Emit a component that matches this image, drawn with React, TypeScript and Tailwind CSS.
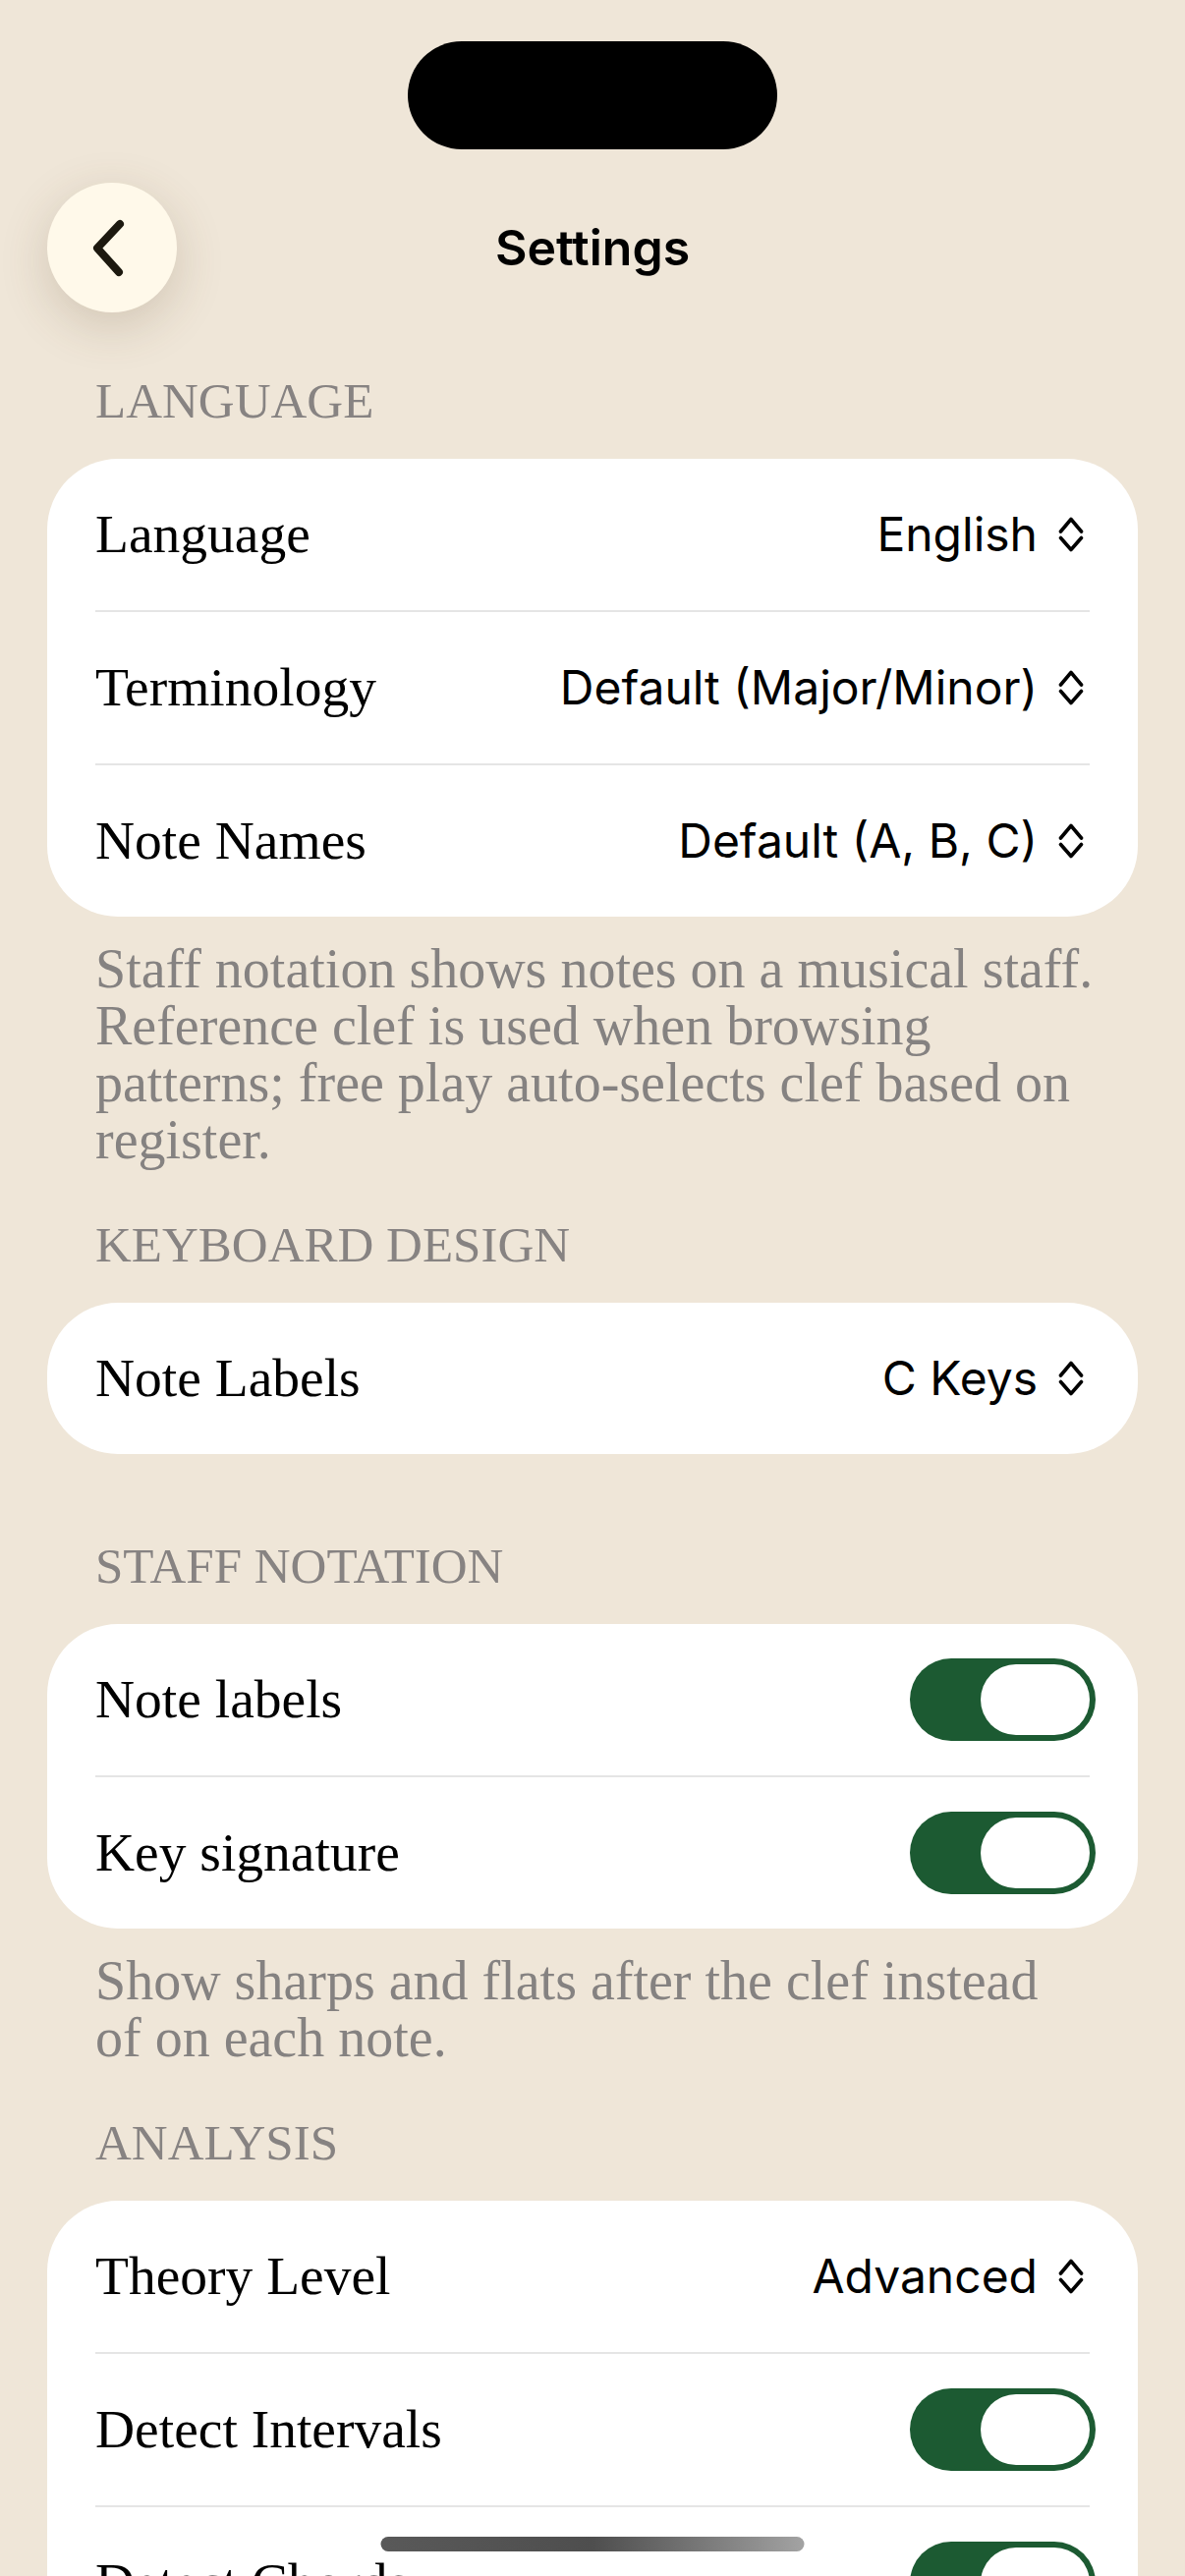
import React from 'react';

type Row =
  | { kind: 'picker'; label: string; value: string }
  | { kind: 'toggle'; label: string; on: boolean };

interface Section {
  title: string;
  gap: string;
  rows: Row[];
  footer?: string[];
}

const sections: Section[] = [
  {
    title: 'LANGUAGE',
    gap: 'mt-[60px]',
    rows: [
      { kind: 'picker', label: 'Language', value: 'English' },
      { kind: 'picker', label: 'Terminology', value: 'Default (Major/Minor)' },
      { kind: 'picker', label: 'Note Names', value: 'Default (A, B, C)' },
    ],
    footer: [
      'Staff notation shows notes on a musical staff.',
      'Reference clef is used when browsing',
      'patterns; free play auto-selects clef based on',
      'register.',
    ],
  },
  {
    title: 'KEYBOARD DESIGN',
    gap: 'mt-[48px]',
    rows: [{ kind: 'picker', label: 'Note Labels', value: 'C Keys' }],
  },
  {
    title: 'STAFF NOTATION',
    gap: 'mt-[84px]',
    rows: [
      { kind: 'toggle', label: 'Note labels', on: true },
      { kind: 'toggle', label: 'Key signature', on: true },
    ],
    footer: ['Show sharps and flats after the clef instead', 'of on each note.'],
  },
  {
    title: 'ANALYSIS',
    gap: 'mt-[48px]',
    rows: [
      { kind: 'picker', label: 'Theory Level', value: 'Advanced' },
      { kind: 'toggle', label: 'Detect Intervals', on: true },
      { kind: 'toggle', label: 'Detect Chords', on: true },
      { kind: 'toggle', label: 'Detect Scales', on: false },
    ],
  },
];

const serif = "font-['Liberation_Serif',Georgia,serif]";
const sans = "font-['Inter','Liberation_Sans',sans-serif]";

const UpDown = () => (
  <svg width="26" height="38" viewBox="0 0 26 38" fill="none" className="mr-[6px] shrink-0">
    <path d="M2.5 16 L13 3.5 L23.5 16" stroke="#000" strokeWidth="3.6" strokeLinecap="round" strokeLinejoin="round" />
    <path d="M2.5 22.5 L13 34.5 L23.5 22.5" stroke="#000" strokeWidth="3.6" strokeLinecap="round" strokeLinejoin="round" />
  </svg>
);

const Toggle = ({ on }: { on: boolean }) => (
  <div
    className={`-mr-[6px] flex h-[84px] w-[189px] shrink-0 items-center rounded-full px-[6px] ${
      on ? 'justify-end bg-[#1c5a32]' : 'justify-start bg-[#e3e0da]'
    }`}
  >
    <div className="h-[72px] w-[111px] rounded-full bg-white" />
  </div>
);

const SettingsRow = ({ row }: { row: Row }) => (
  <div className="flex h-[154px] items-center justify-between">
    <span className={`${serif} text-[55.5px] leading-none text-black`}>{row.label}</span>
    {row.kind === 'picker' ? (
      <div className="flex items-center gap-[21px]">
        <span className={`${sans} text-[48px] leading-none text-black`}>{row.value}</span>
        <UpDown />
      </div>
    ) : (
      <Toggle on={row.on} />
    )}
  </div>
);

export default function App() {
  return (
    <div className="relative h-[2622px] w-full overflow-hidden bg-[#efe6d8]">
      {/* dynamic island */}
      <div className="pt-[42px]">
        <div className="mx-auto h-[110px] w-[376px] rounded-full bg-black" />
      </div>

      {/* nav bar */}
      <div className="mt-[34px] grid h-[132px] grid-cols-[1fr_auto_1fr] items-center px-[48px]">
        <button className="h-[132px] w-[132px] rounded-full bg-[#fff9ea] shadow-[0_14px_50px_rgba(95,72,40,0.2)]">
          <svg width="132" height="132" viewBox="0 0 132 132" fill="none">
            <path d="M74 42 L51 66.5 L73 91" stroke="#1d190f" strokeWidth="8" strokeLinecap="round" strokeLinejoin="round" />
          </svg>
        </button>
        <h1 className={`${sans} text-[50px] font-semibold leading-none text-black`}>Settings</h1>
        <div />
      </div>

      <div className="px-[48px]">
        {sections.map((s) => (
          <div key={s.title}>
            <div className={`${s.gap} ${serif} pl-[49px] text-[51px] leading-[60px] text-[#878382]`}>{s.title}</div>
            <div className="mt-[29px] rounded-[72px] bg-white px-[49px]">
              {s.rows.map((r, i) => (
                <div key={r.label}>
                  {i > 0 && <div className="h-[2px] bg-[#e5e5e5]" />}
                  <SettingsRow row={r} />
                </div>
              ))}
            </div>
            {s.footer && (
              <div className={`mt-[24px] pl-[49px] ${serif} text-[56px] leading-[58px] text-[#858281]`}>
                {s.footer.map((line) => (
                  <div key={line} className="whitespace-nowrap">
                    {line}
                  </div>
                ))}
              </div>
            )}
          </div>
        ))}
      </div>

      {/* home indicator */}
      <div className="absolute bottom-[25px] left-1/2 h-[15px] w-[431px] -translate-x-1/2 rounded-full bg-gradient-to-r from-[#595959] via-[#4e4e4e] to-[#a3a3a3]" />
    </div>
  );
}
